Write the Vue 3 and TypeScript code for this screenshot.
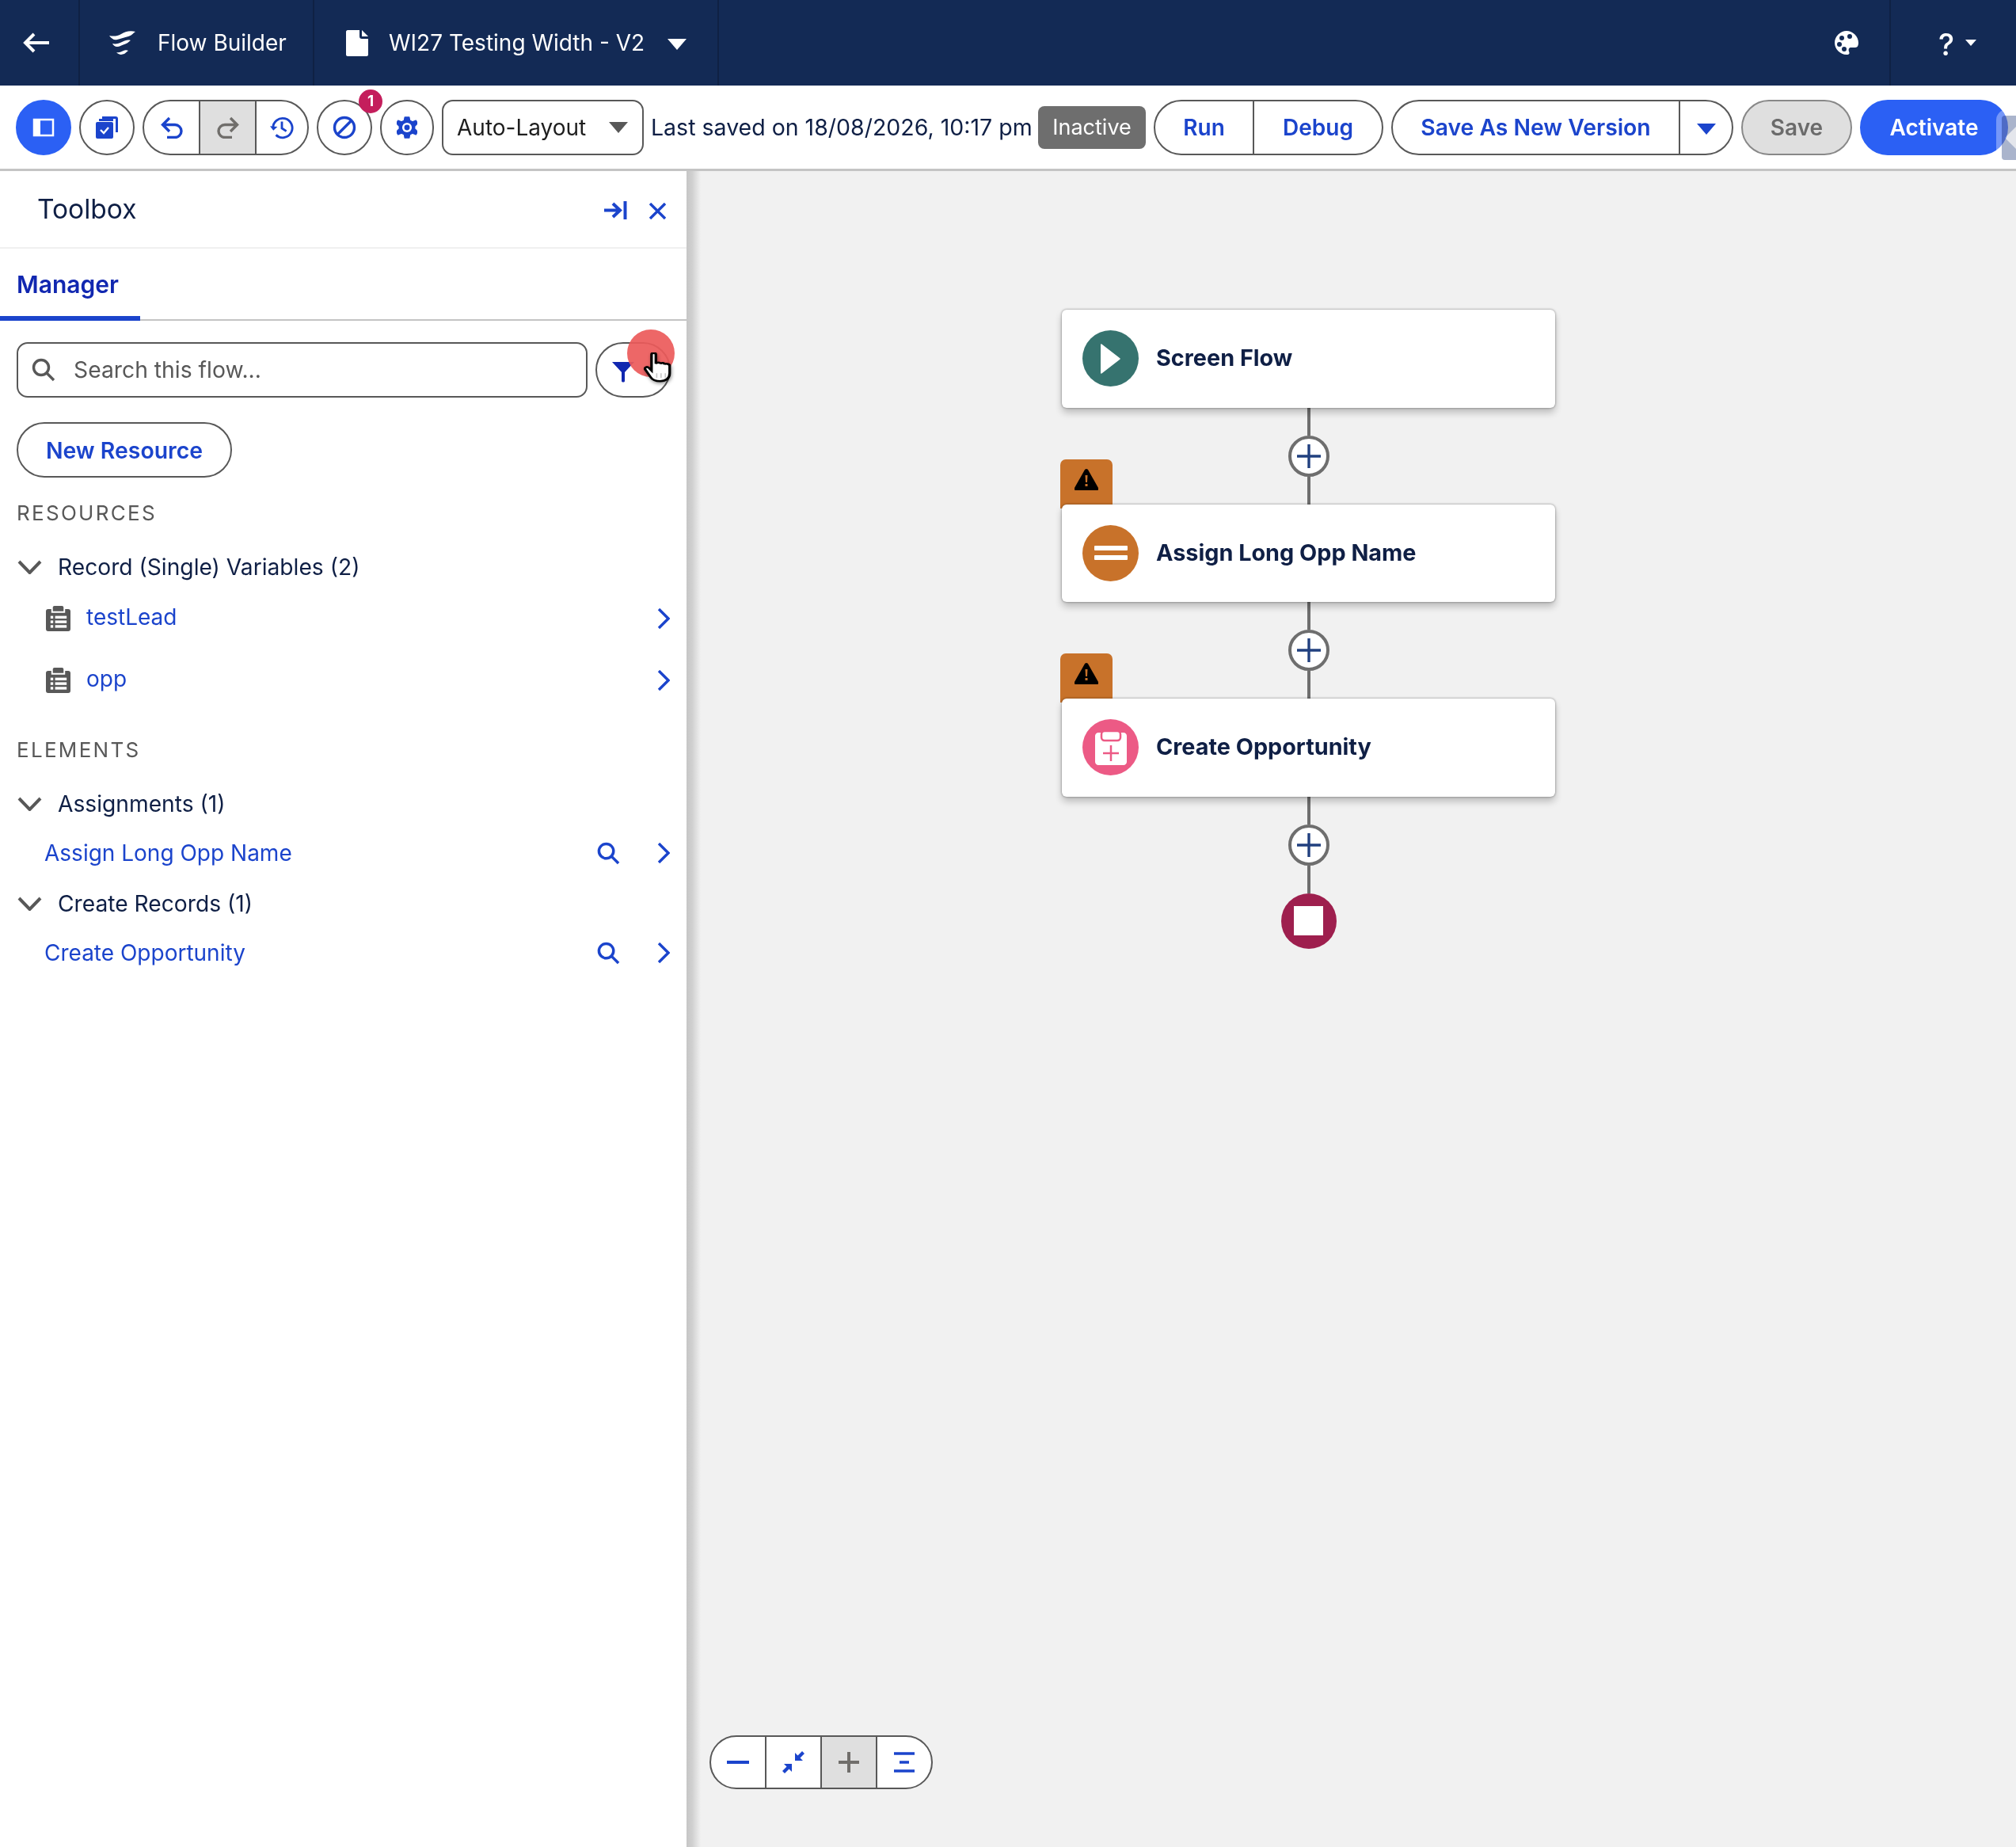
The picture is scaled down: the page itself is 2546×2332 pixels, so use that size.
<script setup lang="ts">
interface FlowNode {
  label: string
  kind: 'start' | 'assign' | 'create'
  warning?: boolean
}

interface TreeItem {
  label: string
}

const nodes: FlowNode[] = [
  { label: 'Screen Flow', kind: 'start' },
  { label: 'Assign Long Opp Name', kind: 'assign', warning: true },
  { label: 'Create Opportunity', kind: 'create', warning: true },
]

const resources: TreeItem[] = [{ label: 'testLead' }, { label: 'opp' }]
</script>

<template>
  <div class="app">
    <header class="topbar">
      <button class="top-cell back">
        <svg width="36" height="30" viewBox="0 0 36 30"><path d="M34 15H5M15 4 4 15l11 11" fill="none" stroke="#fff" stroke-width="4" /></svg>
      </button>
      <div class="top-cell app-name">
        <svg width="34" height="33" viewBox="0 0 34 33" fill="#fff">
          <path d="M0 7c5 1 10 1 15-2 5-3 11-5 18-3-4 3-5 5-9 6-5 1-9 3-14 4-4 1-7-1-10-5z" />
          <path d="M4 17c4 1 8 0 12-2 4-2 7-3 11-2-3 2-4 4-8 5-4 1-6 3-9 3-3 0-5-2-6-4z" />
          <path d="M9 28c4 1 6-1 9-2 2-1 4-1 6 0-2 1-3 3-5 4-3 1-6 2-10-2z" />
        </svg>
        <span>Flow Builder</span>
      </div>
      <div class="top-cell flow-name">
        <svg width="28" height="33" viewBox="0 0 28 33" fill="#fff"><path d="M2 0h15v8c0 2 1 3 3 3h8v20c0 1-1 2-2 2H2c-1 0-2-1-2-2V2C0 1 1 0 2 0zM20 0l8 8h-7c-1 0-1 0-1-1z" /></svg>
        <span>WI27 Testing Width - V2</span>
        <i class="caret white"></i>
      </div>
      <div class="top-space"></div>
      <svg class="palette" width="30" height="30" viewBox="0 0 30 30">
        <path d="M15 0C7 0 0 7 0 15s7 15 15 15c4 0 4-2 3-4-1-3 0-5 3-5h5c3 0 4-3 4-6C30 7 23 0 15 0z" fill="#fff" />
        <g fill="#132a55">
          <circle cx="9" cy="9" r="3" /><circle cx="19" cy="7" r="3" /><circle cx="6" cy="17" r="3" /><circle cx="12" cy="23" r="3" />
        </g>
      </svg>
      <div class="top-cell help">
        <span class="qmark">?</span>
        <i class="caret white small"></i>
      </div>
    </header>

    <div class="toolbar">
      <button class="pill round primary">
        <svg width="28" height="24" viewBox="0 0 28 24"><rect x="2" y="2" width="24" height="20" fill="none" stroke="#fff" stroke-width="2.5" /><rect x="3" y="3" width="7" height="18" fill="#fff" /></svg>
      </button>
      <button class="pill round">
        <svg width="28" height="28" viewBox="0 0 28 28" fill="#1b44cc">
          <path d="M8 0h17c2 0 3 1 3 3v17h-3V3H8z" />
          <path d="M4 3h17c1 0 1 0 1 1v2H4z" />
          <rect x="0" y="7" width="22" height="21" rx="2" />
          <path d="M6 17l4 4 6-7" fill="none" stroke="#fff" stroke-width="2.400" />
        </svg>
      </button>
      <div class="group icons">
        <button class="seg seg-undo">
          <svg width="28" height="28" viewBox="0 0 28 28" fill="none" stroke="#1b44cc" stroke-width="3.400"><path d="M11 2 2.500 10.500l8.500 8.500M2.500 10.500H18a8 8 0 0 1 0 16H8" /></svg>
        </button>
        <button class="seg seg-redo disabled">
          <svg width="28" height="28" viewBox="0 0 28 28" fill="none" stroke="#706e6b" stroke-width="3.400"><path d="M17 2l8.500 8.500L17 19M25.500 10.500H10a8 8 0 0 0 0 16h9" /></svg>
        </button>
        <button class="seg seg-history">
          <svg width="30" height="30" viewBox="0 0 32 32" fill="none" stroke="#1b44cc" stroke-width="3"><path d="M4 17a13 13 0 1 1 4 9" /><path d="M16 8v9l6 4" /><path d="M0 14l4.500 6L10 15" fill="#1b44cc" stroke="none" /></svg>
        </button>
      </div>
      <button class="pill round narrow badged">
        <svg width="30" height="30" viewBox="0 0 30 30" fill="none" stroke="#1b44cc" stroke-width="3.400"><circle cx="15" cy="15" r="12.500" /><path d="M6 24 24 6" /></svg>
        <span class="count">1</span>
      </button>
      <button class="pill round gear">
        <svg width="26" height="28" viewBox="0 0 30 32">
          <path d="M12 1h6l1 5 4 2 5-2 2 4-4 4v4l4 4-2 4-5-2-4 2-1 5h-6l-1-5-4-2-5 2-2-4 4-4v-4L0 10l2-4 5 2 4-2z" fill="#1b44cc" stroke="#1b44cc" stroke-width="2" stroke-linejoin="round" />
          <circle cx="15" cy="16" r="7" fill="#fff" />
          <circle cx="15" cy="16" r="4" fill="#1b44cc" />
        </svg>
      </button>
      <div class="combo">
        <span>Auto-Layout</span>
        <i class="caret grey"></i>
      </div>
      <span class="saved">Last saved on 18/08/2026, 10:17 pm</span>
      <span class="status">Inactive</span>
      <div class="group run-debug">
        <button class="seg text run">Run</button>
        <button class="seg text debug">Debug</button>
      </div>
      <div class="group save-as">
        <button class="seg text version">Save As New Version</button>
        <button class="seg text more"><i class="caret blue"></i></button>
      </div>
      <button class="pill text save">Save</button>
      <button class="pill text activate">Activate</button>
      <div class="dock"><div></div></div>
    </div>

    <div class="workspace">
      <aside class="toolbox">
        <div class="toolbox-head">
          <h2>Toolbox</h2>
          <svg class="dock-to" width="29" height="23" viewBox="0 0 29 23" fill="none" stroke="#1b44cc" stroke-width="4"><path d="M0 11.500h19M11 3l9 8.500L11 20M26.500 0v23" /></svg>
          <svg class="close" width="21" height="21" viewBox="0 0 21 21" fill="none" stroke="#1b44cc" stroke-width="3.400"><path d="M1 1l19 19M20 1 1 20" /></svg>
        </div>
        <div class="tabs"><span class="tab">Manager</span></div>
        <div class="search-row">
          <div class="search">
            <svg width="30" height="30" viewBox="0 0 30 30" fill="none" stroke="#585858" stroke-width="3.400"><circle cx="12" cy="12" r="9.500" /><path d="M19 19l9 9" /></svg>
            <span>Search this flow...</span>
          </div>
          <button class="filter">
            <svg width="28" height="26" viewBox="0 0 28 26" fill="#1127b0"><path d="M0 0h28L16 13v11c0 2-4 2-4 0V13z" /></svg>
          </button>
        </div>
        <button class="new-resource">New Resource</button>

        <h3 class="section first">RESOURCES</h3>
        <div class="tree-head">
          <svg width="31" height="18" viewBox="0 0 31 18" fill="none" stroke="#585858" stroke-width="4"><path d="M2 2l13.500 14L29 2" /></svg>
          Record (Single) Variables (2)
        </div>
        <div v-for="item in resources" :key="item.label" class="tree-item record">
          <svg width="31" height="32" viewBox="0 0 32 33" fill="#585858">
            <path d="M9 2c0-1 1-2 2-2h10c1 0 2 1 2 2v5H9z" />
            <path d="M3 4h4v5h18V4h4c2 0 3 1 3 3v23c0 2-1 3-3 3H3c-2 0-3-1-3-3V7c0-2 1-3 3-3z" />
            <g fill="#fff"><rect x="6" y="13" width="3.500" height="3.500" /><rect x="12" y="13" width="15" height="3.500" /><rect x="6" y="19" width="3.500" height="3.500" /><rect x="12" y="19" width="15" height="3.500" /><rect x="6" y="25" width="3.500" height="3.500" /><rect x="12" y="25" width="15" height="3.500" /></g>
          </svg>
          <a>{{ item.label }}</a>
          <svg width="16" height="26" viewBox="0 0 16 26" fill="none" stroke="#1b44cc" stroke-width="3.400"><path d="M2 1l12 12L2 25" /></svg>
        </div>

        <h3 class="section">ELEMENTS</h3>
        <div class="tree-head">
          <svg width="31" height="18" viewBox="0 0 31 18" fill="none" stroke="#585858" stroke-width="4"><path d="M2 2l13.500 14L29 2" /></svg>
          Assignments (1)
        </div>
        <div class="tree-item">
          <a>Assign Long Opp Name</a>
          <svg class="find" width="29" height="29" viewBox="0 0 30 30" fill="none" stroke="#1b44cc" stroke-width="3.600"><circle cx="12" cy="12" r="9.500" /><path d="M19 19l9 9" /></svg>
          <svg width="16" height="26" viewBox="0 0 16 26" fill="none" stroke="#1b44cc" stroke-width="3.400"><path d="M2 1l12 12L2 25" /></svg>
        </div>
        <div class="tree-head">
          <svg width="31" height="18" viewBox="0 0 31 18" fill="none" stroke="#585858" stroke-width="4"><path d="M2 2l13.500 14L29 2" /></svg>
          Create Records (1)
        </div>
        <div class="tree-item">
          <a>Create Opportunity</a>
          <svg class="find" width="29" height="29" viewBox="0 0 30 30" fill="none" stroke="#1b44cc" stroke-width="3.600"><circle cx="12" cy="12" r="9.500" /><path d="M19 19l9 9" /></svg>
          <svg width="16" height="26" viewBox="0 0 16 26" fill="none" stroke="#1b44cc" stroke-width="3.400"><path d="M2 1l12 12L2 25" /></svg>
        </div>
      </aside>
      <div class="shade"></div>

      <main class="canvas">
        <div class="flow">
          <template v-for="node in nodes" :key="node.label">
            <div class="node-wrap">
              <div v-if="node.warning" class="warn-tab">
                <svg width="30" height="27" viewBox="0 0 30 27"><path d="M15 0c1 0 2 1 2 1l13 23c1 2 0 3-2 3H2c-2 0-3-1-2-3L13 1s1-1 2-1z" /><path d="M13.500 8h3l-.5 9h-2zM13.500 19h3v3h-3z" fill="#c8722a" /></svg>
              </div>
              <div class="node">
                <div class="node-icon" :class="node.kind">
                  <svg v-if="node.kind === 'start'" width="25" height="38" viewBox="0 0 25 38"><path d="M0 1c0-1 1-1 2 0l22 17c1 1 1 1 0 2L2 37c-1 1-2 1-2 0z" fill="#fff" /></svg>
                  <svg v-else-if="node.kind === 'assign'" width="42" height="18" viewBox="0 0 42 18" fill="#fff"><rect width="42" height="6" rx="1" /><rect y="12" width="42" height="6" rx="1" /></svg>
                  <svg v-else width="40" height="44" viewBox="0 0 40 44">
                    <path d="M4 3h32c2 0 4 2 4 4v33c0 2-2 4-4 4H4c-2 0-4-2-4-4V7c0-2 2-4 4-4z" fill="#fff" />
                    <rect x="8" y="1" width="24" height="12" rx="4" fill="#fff" stroke="#ec5a85" stroke-width="2.500" />
                    <path d="M20 19v20M10 29h20" stroke="#ec5a85" stroke-width="2.500" />
                  </svg>
                </div>
                <span>{{ node.label }}</span>
              </div>
            </div>
            <div class="link">
              <div class="line"></div>
              <button class="add">
                <svg width="30" height="30" viewBox="0 0 30 30" stroke="#21407f" stroke-width="3.400"><path d="M15 0v30M0 15h30" /></svg>
              </button>
              <div class="line"></div>
            </div>
          </template>
          <div class="end"><div></div></div>
        </div>

        <div class="zoom-bar">
          <button><svg width="30" height="30" viewBox="0 0 30 30" stroke="#1b44cc" stroke-width="4"><path d="M1 15h28" /></svg></button>
          <button><svg width="30" height="30" viewBox="0 0 30 30" fill="#1b44cc"><path d="M17 3v10h10l-3.500-3.500L29 4l-3-3-5.500 5.500zM13 27V17H3l3.500 3.500L1 26l3 3 5.500-5.500z" /></svg></button>
          <button class="off"><svg width="30" height="30" viewBox="0 0 30 30" stroke="#706e6b" stroke-width="4"><path d="M2 15h26M15 2v26" /></svg></button>
          <button><svg width="30" height="30" viewBox="0 0 30 30" stroke="#1b44cc" stroke-width="3.400"><path d="M2 4h26M9 15h12M2 26h26" /></svg></button>
        </div>
      </main>
    </div>

    <div class="click-spot"></div>
    <svg class="pointer" width="36" height="38" viewBox="0 0 33 45" preserveAspectRatio="none">
      <path d="M9 3c0-3 5-3 5 0v14c1-3 5-2 5 0 1-2 5-2 5 1 1-2 6-1 6 2v11c0 7-4 12-11 12-6 0-9-2-11-6L2 26c-2-3 2-6 4-3l3 4z" fill="#fff" stroke="#000" stroke-width="3" />
      <path d="M15 31v7M20 31v7M25 31v7" stroke="#c9c9c9" stroke-width="1.500" />
    </svg>
  </div>
</template>

<style>
html, body { margin: 0; background: #fff; }
</style>

<style scoped>
.app {
  position: relative;
  display: flex;
  flex-direction: column;
  width: 2546px;
  height: 2332px;
  overflow: hidden;
  font-family: Inter, "Liberation Sans", sans-serif;
  color: #0f1f45;
}
button {
  font: inherit;
  padding: 0;
  background: none;
  border: 0;
}
.caret {
  display: block;
  width: 0;
  height: 0;
  border-left: 12px solid transparent;
  border-right: 12px solid transparent;
  border-top: 14px solid #fff;
}
.caret.small { border-left-width: 7px; border-right-width: 7px; border-top-width: 8px; }
.caret.grey { border-top-color: #585858; }
.caret.blue { border-top-color: #1b44cc; }

/* top bar */
.topbar {
  display: flex;
  align-items: center;
  flex: 0 0 108px;
  background: #132a55;
  color: #fff;
  font-size: 28px;
}
.top-cell {
  display: flex;
  align-items: center;
  height: 100%;
  box-sizing: border-box;
  border-right: 2px solid #0f2144;
}
.back { width: 101px; padding-left: 28px; }
.app-name { width: 296px; padding-left: 37px; gap: 27px; }
.flow-name { width: 511px; padding-left: 40px; gap: 26px; }
.flow-name .caret { margin-left: 3px; margin-top: 4px; }
.top-space { flex: 1; }
.palette { margin-right: 39px; }
.help {
  width: 160px;
  padding-left: 60px;
  gap: 14px;
  border-right: 0;
  border-left: 2px solid #0f2144;
}
.qmark { font-size: 38px; font-weight: 500; margin-top: 4px; }

/* tool bar */
.toolbar {
  position: relative;
  display: flex;
  align-items: center;
  gap: 10px;
  flex: 0 0 108px;
  padding-left: 20px;
  box-sizing: border-box;
  border-bottom: 3px solid #c4c4c4;
  font-size: 28px;
}
.pill,
.group,
.combo {
  display: flex;
  align-items: center;
  justify-content: center;
  height: 70px;
  box-sizing: border-box;
  background: #fff;
  border: 2px solid #585858;
  border-radius: 36px;
}
.round { width: 70px; flex: none; }
.round.narrow { position: relative; }
.gear { width: 68px; }
.primary { background: #2b60f4; border-color: #2b60f4; }
.group { overflow: hidden; }
.seg {
  display: flex;
  align-items: center;
  justify-content: center;
  height: 100%;
  border-right: 2px solid #585858;
  box-sizing: border-box;
}
.seg:last-child { border-right: 0; }
.seg.disabled { background: #dfdfdf; }
.icons { width: 210px; }
.seg-undo { width: 71px; }
.seg-redo { width: 71px; }
.seg-history { flex: 1; }
.count {
  position: absolute;
  top: -15px;
  right: -15px;
  width: 30px;
  height: 30px;
  line-height: 30px;
  text-align: center;
  border-radius: 50%;
  background: #c41e5c;
  color: #fff;
  font-size: 19px;
  font-weight: 700;
}
.combo {
  justify-content: space-between;
  width: 255px;
  padding: 0 18px 0 17px;
  border-radius: 14px;
  color: #1e1e1e;
}
.saved {
  flex: none;
  width: 478px;
  margin-left: -1px;
  margin-right: 1px;
  white-space: nowrap;
  font-size: 28.500px;
}
.status {
  flex: none;
  width: 136px;
  height: 54px;
  line-height: 54px;
  text-align: center;
  background: #6e6e6e;
  color: #fff;
  border-radius: 8px;
  font-size: 27px;
}
.text {
  color: #1b44cc;
  font-size: 28px;
  font-weight: 600;
}
.run-debug { width: 290px; }
.run { width: 125px; }
.debug { flex: 1; }
.save-as { width: 432px; }
.version { width: 363px; font-size: 28.300px; }
.more { flex: 1; }
.more .caret { margin-top: 4px; }
.save {
  width: 140px;
  background: #dfdfdf;
  border-color: #888;
  color: #6b6b6b;
}
.activate {
  width: 187px;
  background: #2b60f4;
  border-color: #2b60f4;
  color: #fff;
}
.dock {
  position: absolute;
  top: 30px;
  right: -25px;
  width: 50px;
  height: 72px;
  box-sizing: border-box;
  padding: 8px 0 8px 7px;
  border-radius: 14px;
  background: rgba(255, 255, 255, 0.35);
}
.dock div {
  position: relative;
  height: 100%;
  overflow: hidden;
  background: #aab4cc;
  border-radius: 4px;
  mix-blend-mode: multiply;
}
.dock div::after {
  content: "";
  position: absolute;
  left: 9px;
  top: 16px;
  width: 24px;
  height: 24px;
  background: #e4e6ec;
  transform: rotate(45deg);
}

/* left panel */
.workspace { display: flex; flex: 1; min-height: 0; }
.toolbox {
  flex: 0 0 867px;
  background: #fff;
  font-size: 28px;
}
.toolbox-head {
  display: flex;
  align-items: center;
  height: 98px;
  box-sizing: border-box;
  padding: 0 26px 0 47px;
  border-bottom: 2px solid #f0f0f0;
}
.toolbox-head h2 {
  flex: 1;
  margin: 0;
  font-size: 33.500px;
  font-weight: 400;
}
.dock-to { margin-top: 2px; }
.close { margin-left: 28px; margin-top: 4px; }
.tabs {
  height: 91px;
  box-sizing: border-box;
  border-bottom: 2px solid #c4c4c4;
}
.tab {
  display: block;
  width: 177px;
  height: 91px;
  box-sizing: border-box;
  padding: 27px 0 0 21px;
  border-bottom: 6px solid #1b44cc;
  color: #1127b0;
  font-size: 30px;
  font-weight: 600;
  line-height: 36px;
}
.search-row {
  display: flex;
  gap: 10px;
  padding: 27px 20px 0 21px;
}
.search {
  display: flex;
  align-items: center;
  gap: 23px;
  width: 721px;
  height: 70px;
  box-sizing: border-box;
  padding-left: 17px;
  border: 2px solid #585858;
  border-radius: 14px;
  color: #585858;
  font-size: 28.300px;
}
.filter {
  display: flex;
  width: 95px;
  height: 70px;
  box-sizing: border-box;
  padding: 23px 0 0 19px;
  border: 2px solid #585858;
  border-radius: 36px;
}
.new-resource {
  display: block;
  width: 272px;
  height: 70px;
  margin: 31px 0 0 21px;
  border: 2px solid #585858;
  border-radius: 36px;
  color: #1b44cc;
  font-size: 28.400px;
  font-weight: 600;
}
.section {
  margin: 0;
  padding: 33px 0 0 21px;
  font-size: 26px;
  font-weight: 400;
  line-height: 32px;
  letter-spacing: 2.300px;
  color: #585858;
}
.section.first { padding-top: 29px; }
.tree-head {
  display: flex;
  align-items: center;
  height: 62px;
  margin-top: 21px;
  padding-left: 22px;
  gap: 20px;
  font-size: 28.200px;
}
.tree-item + .tree-head { margin-top: 2px; }
.tree-item {
  display: flex;
  align-items: center;
  height: 62px;
  padding: 0 21px 0 56px;
}
.tree-item a { flex: 1; color: #1b44cc; }
.tree-item.record { height: 78px; padding-left: 58px; }
.tree-head + .record { margin-top: -5px; }
.tree-item.record a { margin-left: 20px; margin-top: -4px; }
.find { margin-right: 47px; }
.shade {
  flex: 0 0 18px;
  background: linear-gradient(90deg, #c6c6c6 0, #d0d0d0 40%, #f1f1f1 100%);
}

/* canvas */
.canvas {
  position: relative;
  flex: 1;
  background: #f1f1f1;
}
.flow {
  display: flex;
  flex-direction: column;
  width: 623px;
  margin: 175px 0 0 456px;
}
.node-wrap { position: relative; }
.warn-tab {
  position: absolute;
  top: -57px;
  left: -2px;
  width: 66px;
  height: 62px;
  padding-top: 12px;
  box-sizing: border-box;
  text-align: center;
  background: #c8722a;
  border-radius: 7px 7px 0 0;
}
.node {
  position: relative;
  display: flex;
  align-items: center;
  gap: 22px;
  height: 123.500px;
  box-sizing: border-box;
  padding: 0 26px;
  background: #fff;
  border-radius: 6px;
  box-shadow: 0 0 3px rgba(0, 0, 0, 0.45), 0 6px 10px rgba(0, 0, 0, 0.22);
  font-size: 28.800px;
  font-weight: 700;
}
.node span { margin-top: -2px; }
.node-icon {
  display: flex;
  align-items: center;
  justify-content: center;
  width: 71px;
  height: 71px;
  border-radius: 50%;
  flex: none;
}
.node-icon.start { background: #36736f; }
.node-icon.assign { background: #c8722a; }
.node-icon.create { background: #ec5a85; }
.link {
  display: flex;
  flex-direction: column;
  align-items: center;
}
.line { width: 4px; height: 35px; background: #6e6e6e; }
.add {
  display: flex;
  align-items: center;
  justify-content: center;
  width: 52px;
  height: 52px;
  box-sizing: border-box;
  background: #fff;
  border: 4px solid #6e6e6e;
  border-radius: 50%;
}
.end {
  display: flex;
  align-items: center;
  justify-content: center;
  align-self: center;
  width: 70px;
  height: 70px;
  background: #9e1f4e;
  border-radius: 50%;
}
.end div { width: 37px; height: 37px; background: #fff; }
.zoom-bar {
  position: absolute;
  left: 11px;
  bottom: 73px;
  display: flex;
  width: 282px;
  height: 68px;
  box-sizing: border-box;
  overflow: hidden;
  background: #fff;
  border: 2px solid #585858;
  border-radius: 34px;
}
.zoom-bar button {
  display: flex;
  align-items: center;
  justify-content: center;
  flex: 1;
  border-right: 2px solid #585858;
}
.zoom-bar button:last-child { border-right: 0; }
.zoom-bar .off { background: #dfdfdf; }

/* recorded click marker and cursor */
.click-spot {
  position: absolute;
  left: 792px;
  top: 416px;
  width: 60px;
  height: 60px;
  border-radius: 50%;
  background: rgba(235, 90, 90, 0.92);
}
.pointer {
  position: absolute;
  left: 813px;
  top: 445px;
  filter: drop-shadow(1px 2px 2px rgba(0, 0, 0, 0.4));
}
</style>
